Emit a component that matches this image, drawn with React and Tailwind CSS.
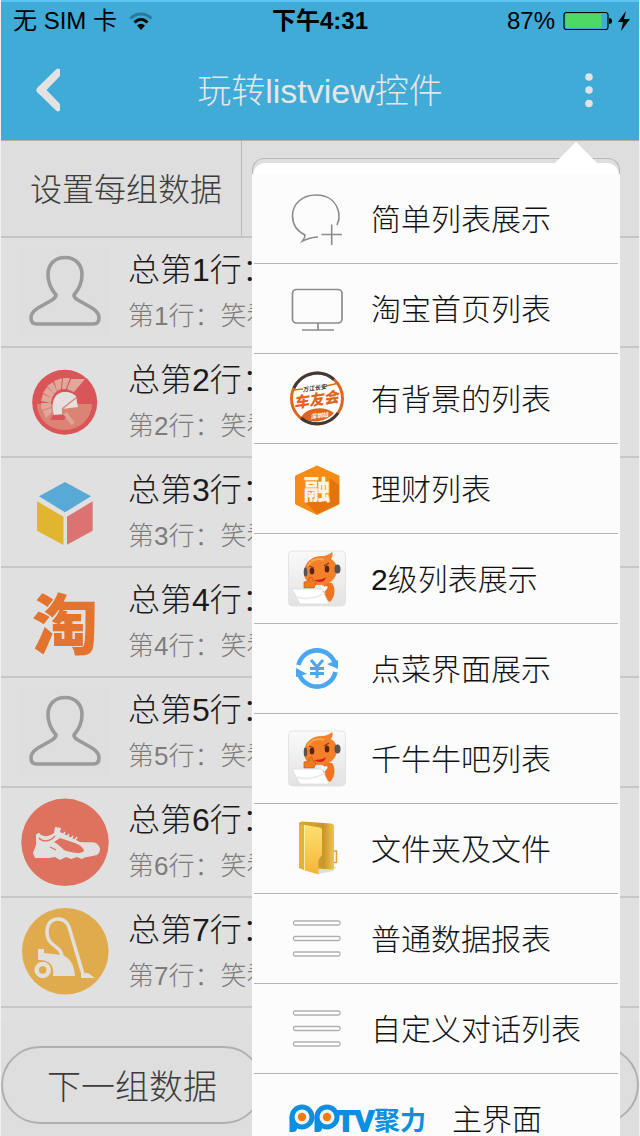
import React from 'react';

const PersonIcon = () => (
  <svg viewBox="0 0 90 90" className="w-full h-full bg-[#dedede]">
    <path
      d="M36 48C31 42 28 36 28 28C28 17 35 10.500 45 10.500S62 17 62 28C62 36 59 42 54 48C54 50 56 52 58 53L72 61C77 64 79 67 79 71C79 75 77 77 73 77H17C13 77 11 75 11 71C11 67 13 64 18 61L32 53C35 51 36 50 36 48Z"
      fill="none"
      stroke="#9a9a9a"
      strokeWidth="3.600"
    />
  </svg>
);

const SpartanIcon = () => (
  <svg viewBox="0 0 90 90" className="w-full h-full">
    <circle cx="44.700" cy="45.300" r="32.500" fill="#d95558" />
    <path d="M17 47H72A27.500 26 0 0 1 17 47Z" fill="#dc8474" />
    <g fill="#dfa89b">
      <path d="M47 32L51 22L65 22L54 35Z" />
      <path d="M42 32L43 21L50 21L46 32Z" />
      <path d="M37 34L34 24L42 21L41 32Z" />
      <path d="M34 37L27 29L33 25L37 34Z" />
      <path d="M32 41L23 36L27 30L34 37Z" />
      <path d="M31 46L21 44L23 37L32 41Z" />
      <path d="M31 50L22 53L21 46L31 46Z" />
      <path d="M32 55L26 61L23 54L31 51Z" />
    </g>
    <path d="M34 58C30 43 36 35 45 35C51 35 53 37 56 39L58 50L42 52V57Z" fill="#e4e0df" />
    <path d="M42 52L57 40" stroke="#dc8474" strokeWidth="1.500" />
    <path d="M33 58H47L44 63H30Z" fill="#d95558" />
    <path d="M45 56L53 67" stroke="#e0a597" strokeWidth="4" />
  </svg>
);

const CubeIcon = () => (
  <svg viewBox="0 0 90 90" className="w-full h-full">
    <path d="M45 15L71 29.300L45 45.300L19 29.300Z" fill="#58a9d6" />
    <path d="M17 34.300L43.500 49.700V78L17 63.700Z" fill="#e1b52f" />
    <path d="M47 49.700L72.700 34.300V63.700L47 77.700Z" fill="#db7373" />
  </svg>
);

const TaoIcon = () => (
  <span className="flex w-full h-full items-center justify-center pt-2 text-[66px] leading-none font-black text-[#e2742f]">
    淘
  </span>
);

const ShoeIcon = () => (
  <svg viewBox="0 0 90 90" className="w-full h-full">
    <circle cx="45" cy="45.300" r="43.700" fill="#de725e" />
    <path
      d="M16 38C17 36 20 35 20 37C23 40 29 40 34 36L35 30L41 31L40 35L60 45C68 46 74 44 77 47C82 51 80 56 77 58C71 60 66 59 62 62L57 60L51 62L46 60L40 63L35 60L29 61L15 61L13 56C15 51 17 47 16 43Z"
      fill="#e2e0df"
    />
    <path d="M34 45L40 41L55 46C60 48 64 51 64 54C60 58 51 55 46 54C42 52 40 48 34 45Z" fill="#de725e" />
    <path d="M19 41C23 46 31 44 35 39M30 50L36 53" fill="none" stroke="#de725e" strokeWidth="1.300" />
    <path d="M43 38l2-3M47 40l2-3M51 42l2-3M55 43l2-3" stroke="#e2e0df" strokeWidth="1.500" />
  </svg>
);

const VacuumIcon = () => (
  <svg viewBox="0 0 90 90" className="w-full h-full">
    <circle cx="45.300" cy="44.300" r="43.300" fill="#e0ab4c" />
    <path
      d="M42 50C42 40 31 40 28 31C25 21 29 12 38 12C44 12 47 15 49 20L63 67"
      fill="none"
      stroke="#e2e0dc"
      strokeWidth="3.500"
    />
    <path d="M61 66L68 66L75 71H61Z" fill="#e2e0dc" />
    <path d="M18 42H24V46L42 48C50 51 54 57 55 69H33C35 59 29 52 18 53Z" fill="#e2e0dc" />
    <circle cx="22.700" cy="63" r="6" fill="none" stroke="#e2e0dc" strokeWidth="4.500" />
  </svg>
);

const DarkIcon = () => (
  <svg viewBox="0 0 90 90" className="w-full h-full">
    <circle cx="46" cy="44" r="40" fill="#777" />
  </svg>
);

const ChatPlusIcon = () => (
  <svg viewBox="0 0 58 58" className="size-[58px]" fill="none" stroke="#8c8c8c" strokeWidth="1.600">
    <path d="M49 35C51 31 51.500 28 51 24C49 12 41 5 28 5C14 5 4.500 14 4.500 26C4.500 34 9 41 17 45C17 47 16 49 14.500 51C19 49 24 47 30 47" />
    <path d="M43.700 34.500V55M33.500 44.500H54" />
  </svg>
);

const MonitorIcon = () => (
  <svg viewBox="0 0 58 58" className="size-[58px]" fill="none" stroke="#8c8c8c" strokeWidth="1.700">
    <rect x="4.500" y="9.500" width="49.500" height="33.500" rx="4" />
    <path d="M30 43V50M14 50H46" />
  </svg>
);

const CarClubIcon = () => (
  <svg viewBox="0 0 58 58" className="size-[58px]">
    <circle cx="29" cy="28.500" r="25" fill="#fff" />
    <path d="M13 47C20 36 38 36 46 43A25 25 0 0 1 13 47Z" fill="#e0661f" />
    <circle cx="29" cy="28.500" r="25.500" fill="none" stroke="#e0661f" strokeWidth="3" />
    <path d="M6 18A25.500 25.500 0 0 1 46 9.500M13 48A25.500 25.500 0 0 0 50 43" fill="none" stroke="#3c3c3c" strokeWidth="3" />
    <path d="M6 20L15 19M38 16L51 13" stroke="#e0661f" strokeWidth="1.500" />
    <g transform="rotate(-8 29 29)" fontStyle="italic" textAnchor="middle">
      <text x="28" y="20" fontSize="6" fontWeight="700" fill="#333">万江长安</text>
      <text x="28" y="35" fontSize="15" fontWeight="900" fill="#e0661f">车友会</text>
      <text x="29" y="48" fontSize="6" fontWeight="700" fill="#fff">深圳站</text>
    </g>
  </svg>
);

const FinanceIcon = () => (
  <svg viewBox="0 0 58 58" className="size-[58px]">
    <path d="M29 6L51 16V44L29 54.500L7.500 44V16Z" fill="#f78c14" stroke="#f78c14" strokeLinejoin="round" />
    <path d="M42 18L51 25V44L29 54L17 42H42Z" fill="#e5740c" />
    <text x="29" y="40" fontSize="27" fontWeight="900" fill="#fff5e6" textAnchor="middle">融</text>
  </svg>
);

const MascotIcon = () => (
  <svg viewBox="0 0 58 58" className="size-[58px]">
    <defs>
      <linearGradient id="tile" x2="0" y2="1">
        <stop stopColor="#fafafa" />
        <stop offset="1" stopColor="#e2e2e2" />
      </linearGradient>
    </defs>
    <rect x=".5" y="1" width="57" height="55" rx="4" fill="url(#tile)" stroke="#e4e4e4" />
    <path d="M34 32L44 33C48 39 47 47 42 52L36 48Z" fill="#ee7420" />
    <path d="M16 23C16 12 24 6 34 6C38 6 42 4 44 2C45 4 45 6 43 9C49 13 51 19 48 25C45 32 39 35 31 35C22 35 16 31 16 23Z" fill="#f4802a" />
    <path d="M20 16C23 9 31 8 36 10" fill="none" stroke="#faa548" strokeWidth="2" />
    <ellipse cx="17.500" cy="22" rx="1.800" ry="4.500" fill="#555" />
    <ellipse cx="49.500" cy="19" rx="3" ry="4.500" fill="#555" />
    <ellipse cx="24" cy="21" rx="2.300" ry="3.600" fill="#5a2412" />
    <ellipse cx="39" cy="19" rx="2.300" ry="3.600" fill="#5a2412" />
    <path d="M21 16L26 18M36 16L41 13" stroke="#8b3a12" strokeWidth="1.200" />
    <path d="M26 30Q34 30 38 27Q37 32 32 32Q28 32 26 30Z" fill="#d1251d" />
    <path d="M16 38V32L21 31V28L24 27L25 31L28 33L26 38Z" fill="#f07a1e" stroke="#c9541a" strokeWidth=".7" />
    <path d="M36.500 42L33 38C33 35 36 35 36.500 37C38 35 40 36 39.500 38Z" fill="#fff" />
    <path d="M4 39H34L41 54H12Z" fill="#fff" stroke="#dadada" strokeWidth=".8" />
    <path d="M8 47C18 50 28 48 37 43" fill="none" stroke="#ececec" strokeWidth="2" />
  </svg>
);

const YenIcon = () => (
  <svg viewBox="0 0 58 58" className="size-[58px]" fill="none" stroke="#4aa8ee" strokeWidth="4.600">
    <path d="M10.500 25A19 19 0 0 1 47.500 25M47.500 32A19 19 0 0 1 10.500 32" />
    <path d="M39 24L50 20L50 29Z M8 28L8 37L19 34Z" fill="#4aa8ee" stroke="none" />
    <path d="M23 20L29 27L35 20M29 27V38M22 28.500H36M22 33.500H36" strokeWidth="3" />
  </svg>
);

const FolderIcon = () => (
  <svg viewBox="0 0 58 58" className="size-[58px]">
    <defs>
      <linearGradient id="front" x2="0" y2="1">
        <stop stopColor="#fde070" />
        <stop offset="1" stopColor="#f6b43a" />
      </linearGradient>
      <linearGradient id="back" x2="1">
        <stop stopColor="#dca82e" />
        <stop offset=".7" stopColor="#c9962a" />
        <stop offset="1" stopColor="#f0c44c" />
      </linearGradient>
    </defs>
    <path d="M30 54L45 51L48 47L30 46Z" fill="#ddd" />
    <path d="M11 3Q12 1.500 14 1.500L43 3.500Q46 4 46 6V47Q46 49 44 49.500L24 48L11 44Z" fill="url(#back)" />
    <path d="M11 4L17 5.500V50.500L11 48Z" fill="#e4b13a" />
    <path d="M17 5L32 7.500Q34 8 34 10V35L30.500 40V54.500L17 50.500Z" fill="url(#front)" />
    <path d="M16.500 5V50" stroke="#fff0a8" />
    <path d="M46 31H48.500V42.500H46" fill="none" stroke="#d9a52e" strokeWidth="1.500" />
  </svg>
);

const LinesIcon = () => (
  <svg viewBox="0 0 58 58" className="size-[58px]" fill="#fff" stroke="#b0b0b0" strokeWidth="1.300">
    <rect x="5.500" y="11" width="46.500" height="4" rx="1.500" />
    <rect x="5.500" y="26.500" width="46.500" height="4" rx="1.500" />
    <rect x="5.500" y="42" width="46.500" height="4" rx="1.500" />
  </svg>
);

const PptvIcon = () => (
  <svg viewBox="0 0 139 58" className="h-[58px] w-[139px]" fill="#0c8fe0">
    <path d="M1.500 27H9V38Q9 42 5 42H1.500Z M26.500 27H34V38Q34 42 30 42H26.500Z" />
    <circle cx="14" cy="27" r="12.500" />
    <circle cx="39" cy="27" r="12.500" />
    <circle cx="14" cy="27" r="7.500" fill="#f2f2f2" />
    <circle cx="39" cy="27" r="7.500" fill="#f2f2f2" />
    <circle cx="14" cy="27" r="4.200" fill="#ee7d11" />
    <circle cx="39" cy="27" r="4.200" fill="#ee7d11" />
    <text x="49" y="41" fontSize="29" fontWeight="700" stroke="#0c8fe0" strokeWidth="2">TV</text>
    <text x="86" y="40" fontSize="26" fontWeight="700">聚力</text>
  </svg>
);

const rows = [
  { id: 1, Icon: PersonIcon },
  { id: 2, Icon: SpartanIcon },
  { id: 3, Icon: CubeIcon },
  { id: 4, Icon: TaoIcon },
  { id: 5, Icon: PersonIcon },
  { id: 6, Icon: ShoeIcon },
  { id: 7, Icon: VacuumIcon },
];

const menuItems = [
  { label: '简单列表展示', Icon: ChatPlusIcon },
  { label: '淘宝首页列表', Icon: MonitorIcon },
  { label: '有背景的列表', Icon: CarClubIcon },
  { label: '理财列表', Icon: FinanceIcon },
  { label: '2级列表展示', Icon: MascotIcon },
  { label: '点菜界面展示', Icon: YenIcon },
  { label: '千牛牛吧列表', Icon: MascotIcon },
  { label: '文件夹及文件', Icon: FolderIcon },
  { label: '普通数据报表', Icon: LinesIcon },
  { label: '自定义对话列表', Icon: LinesIcon },
  { label: '主界面', Icon: PptvIcon },
];

const StatusBar = () => (
  <div className="grid h-10 grid-cols-3 items-center px-3 pt-0.5 text-2xl text-black">
    <div className="flex items-center gap-3">
      <span>无 SIM 卡</span>
      <svg viewBox="0 0 24 18" className="h-[18px] w-6" fill="none" stroke="#000" strokeWidth="3">
        <path d="M1.500 6.500C7.500 .5 16.500 .5 22.500 6.500" stroke="#277a9c" />
        <path d="M5.500 10.500C9.500 6.500 14.500 6.500 18.500 10.500" />
        <path d="M8 13.500Q12 10 16 13.500L12 18Z" fill="#000" stroke="none" />
      </svg>
    </div>
    <div className="text-center font-bold">下午4:31</div>
    <div className="-mr-1 flex items-center justify-end gap-2">
      <span>87%</span>
      <svg viewBox="0 0 68 20" className="h-5 w-[68px]">
        <rect x="1" y="1.500" width="44" height="17" rx="2.500" fill="none" stroke="#000" strokeWidth="1.200" />
        <rect x="2.500" y="3" width="36" height="14" rx="1" fill="#4cd964" />
        <path d="M46 7Q49 7 49 10T46 13Z" />
        <path d="M63 0L55 11H60L58 20L67 8H61Z" />
      </svg>
    </div>
  </div>
);

const TitleBar = () => (
  <div className="flex h-[100px] items-center justify-between px-[30px]">
    <button aria-label="返回" className="h-12 w-9">
      <svg viewBox="0 0 36 48" className="h-12 w-9">
        <path d="M29 3.500V10L15.500 24L29 38V44.500Q27 46.500 25 44.500L6 26Q4.500 24 6 22L25 3.500Q27 1.500 29 3.500Z" fill="#e2e2e2" />
      </svg>
    </button>
    <h1 className="pt-0.5 text-[34px] font-light text-[#e6e6e6]">玩转listview控件</h1>
    <button aria-label="更多" aria-expanded="true" className="h-12 w-9">
      <svg viewBox="0 0 36 48" className="h-12 w-9" fill="#e2e2e2">
        <circle cx="16" cy="11" r="3.800" />
        <circle cx="16" cy="24" r="3.800" />
        <circle cx="16" cy="37.500" r="3.800" />
      </svg>
    </button>
  </div>
);

const PopupMenu = () => (
  <nav className="absolute top-[142px] right-[19px] w-[368px]">
    <svg viewBox="0 0 44 22" className="absolute top-0 right-[22px] h-[22px] w-11">
      <path d="M22 0L44 22H0Z" fill="#fff" />
    </svg>
    <div className="mt-4 h-4 overflow-hidden rounded-t-xl border border-b-0 border-[#b8b8b8] bg-[#dedede] pt-1">
      <div className="h-4 rounded-t-xl bg-white"></div>
    </div>
    <ul className="bg-[#fcfcfc] px-0.5">
      {menuItems.map(({ label, Icon }) => (
        <li key={label} className="h-[90px] border-b border-[#b4b4b4]">
          <button className="flex h-full w-full items-center gap-[25px] pl-[34px] text-left text-[30px] font-light text-[#111]">
            <Icon />
            <span className="pt-0.5">{label}</span>
          </button>
        </li>
      ))}
    </ul>
  </nav>
);

const App = () => {
  return (
    <div className="relative flex h-screen flex-col overflow-hidden border-x border-[#f0f0f0] bg-[#e0e0e0] font-['Liberation_Sans','Noto_Sans_CJK_SC',sans-serif]">
      <header className="border-t-2 border-[#5cc6f2] bg-[#3fabd6]">
        <div className="-mt-0.5">
          <StatusBar />
          <TitleBar />
        </div>
      </header>

      <div className="flex h-[98px] shrink-0 border-t border-b-2 border-t-[#b0b0b0] border-b-[#c4c4c4] bg-[#dedede]">
        <button className="w-[241px] border-r border-[#b8b8b8] pt-0.5 pl-2.5 text-[32px] font-light text-[#3c3c3c]">
          设置每组数据
        </button>
      </div>

      <main className="min-h-0 flex-1 overflow-hidden">
        <ul>
          {rows.map(({ id, Icon }) => (
            <li key={id} className="flex h-[110px] items-center gap-[18px] border-b-2 border-[#c8c8c8] pl-[19px]">
              <div className="size-[90px] shrink-0">
                <Icon />
              </div>
              <div className="min-w-0 flex-1">
                <p className="text-[32px] leading-[48px] font-light text-[#1a1a1a]">总第{id}行：</p>
                <p className="text-[26px] leading-[44px] font-light text-[#7c7c7c]">第{id}行：笑看</p>
              </div>
            </li>
          ))}
          <li className="flex h-[110px] items-center pl-[19px]">
            <div className="size-[90px] shrink-0">
              <DarkIcon />
            </div>
          </li>
        </ul>
      </main>

      <footer className="flex justify-between bg-[#dedede] pt-6 pb-3">
        <button className="h-[78px] w-[262px] rounded-full border-2 border-[#b0b0b0] pt-1 text-[34px] font-light text-[#3c3c3c]">
          下一组数据
        </button>
        <button aria-label="上一组数据" className="h-[78px] w-[262px] rounded-full border-2 border-[#b0b0b0]"></button>
      </footer>

      <PopupMenu />
    </div>
  );
};

export default App;
